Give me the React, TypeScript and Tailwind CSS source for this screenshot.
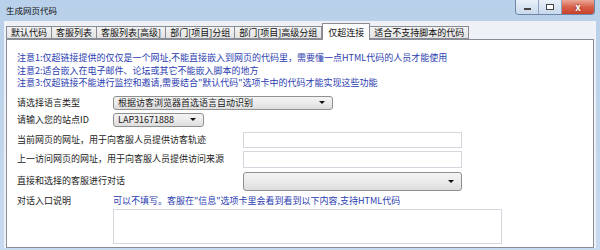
import React from 'react';

const tabs = ['默认代码', '客服列表', '客服列表[高级]', '部门[项目]分组', '部门[项目]高级分组', '仅超连接', '适合不支持脚本的代码'];
const activeTab = 5;

const notes = [
  '注意1:仅超链接提供的仅仅是一个网址,不能直接嵌入到网页的代码里，需要懂一点HTML代码的人员才能使用',
  '注意2:适合嵌入在电子邮件、论坛或其它不能嵌入脚本的地方',
  '注意3:仅超链接不能进行监控和邀请,需要结合"默认代码"选项卡中的代码才能实现这些功能',
];

// win7 style combo box
function Combo({ text, className }: { text?: string; className: string }) {
  return (
    <div
      className={`flex items-center justify-between rounded-[3px] border border-[#8f9090] bg-gradient-to-b from-[#f4f4f4] via-[#ebebeb] to-[#dddddd] pl-[4px] pr-[7px] ${className}`}
    >
      <span className="leading-none text-[#222]">{text}</span>
      <span className="h-0 w-0 border-x-[3px] border-t-[3px] border-x-transparent border-t-[#111]" />
    </div>
  );
}

function TextBox({ className }: { className: string }) {
  return <div className={`border border-[#d4d8de] bg-white ${className}`} />;
}

export default function App() {
  return (
    <div className="flex h-[250px] w-[600px] flex-col overflow-hidden bg-gradient-to-b from-[#b9d0ea] to-[#c7daef] font-['Noto_Sans_CJK_SC',sans-serif]">
      {/* Title bar */}
      <div className="flex h-[21px] shrink-0 items-start justify-between">
        <span className="pl-[6px] pt-[6px] text-[8.5px] leading-none text-[#111]">生成网页代码</span>
        <div className="mr-[5px] flex h-[15px] overflow-hidden rounded-b-[4px] border border-t-0 border-[#6d86a5]">
          <div className="flex w-[23px] items-end justify-center border-r border-[#8aa1bd] bg-gradient-to-b from-[#e9f0f8] to-[#c8d9ec] pb-[4px]">
            <div className="h-[2px] w-[7px] border border-[#444] bg-white" />
          </div>
          <div className="flex w-[23px] items-center justify-center border-r border-[#8aa1bd] bg-gradient-to-b from-[#e9f0f8] to-[#c8d9ec]">
            <div className="h-[6px] w-[8px] border border-[#444] bg-white" />
          </div>
          <div className="flex w-[32px] items-center justify-center bg-gradient-to-b from-[#eba898] via-[#d6604a] to-[#c8402b]">
            <span className="text-[10px] font-bold leading-none text-white [text-shadow:0_0_2px_#7a1d10]">x</span>
          </div>
        </div>
      </div>

      {/* Client area */}
      <div className="mx-[4px] mb-[2px] flex flex-1 flex-col bg-[#eef1f5] px-[2px] pt-[5px]">
        {/* Tabs */}
        <div className="flex h-[13px] shrink-0 items-end">
          {tabs.map((t, i) =>
            i === activeTab ? (
              <div
                key={t}
                className="relative z-10 -mb-px mt-[-3px] flex h-[17px] items-center border border-b-0 border-[#898c95] bg-white px-[5px] text-[9px] leading-none text-[#111]"
              >
                {t}
              </div>
            ) : (
              <div
                key={t}
                className="-ml-px flex h-[13px] items-center border border-[#898c95] bg-gradient-to-b from-[#f3f3f3] to-[#e3e3e3] px-[4px] text-[9px] leading-none text-[#111] first:ml-0"
              >
                {t}
              </div>
            )
          )}
        </div>

        {/* Panel */}
        <div className="flex w-[588px] flex-1 flex-col border border-[#898c95] bg-white pl-[10px] pt-[12px] text-[9px] text-[#222]">
          <div className="text-[#2a3cb0]">
            {notes.map((n) => (
              <div key={n} className="h-[12.5px] whitespace-nowrap leading-[12.5px]">
                {n}
              </div>
            ))}
          </div>

          <div className="mt-[6px] flex h-[14px] items-center">
            <span className="w-[96px]">请选择语言类型</span>
            <Combo text="根据访客浏览器首选语言自动识别" className="h-[14px] w-[220px]" />
          </div>
          <div className="mt-[3px] flex h-[14px] items-center">
            <span className="w-[96px]">请输入您的站点ID</span>
            <Combo text="LAP31671888" className="h-[14px] w-[91px]" />
          </div>
          <div className="mt-[5px] flex h-[16px] items-center">
            <span className="w-[226px] whitespace-nowrap">当前网页的网址，用于向客服人员提供访客轨迹</span>
            <TextBox className="h-[16px] w-[219px]" />
          </div>
          <div className="mt-[3px] flex h-[17px] items-center">
            <span className="w-[226px] whitespace-nowrap">上一访问网页的网址，用于向客服人员提供访问来源</span>
            <TextBox className="h-[17px] w-[219px]" />
          </div>
          <div className="mt-[4px] flex h-[19px] items-center">
            <span className="w-[226px] whitespace-nowrap">直接和选择的客服进行对话</span>
            <Combo className="h-[19px] w-[219px]" />
          </div>
          <div className="mt-[3px] flex h-[14px] items-center">
            <span className="w-[96px]">对话入口说明</span>
            <span className="whitespace-nowrap text-[#2a3cb0]">可以不填写。客服在"信息"选项卡里会看到看到以下内容,支持HTML代码</span>
          </div>
          <div className="mt-[1px] flex">
            <div className="w-[96px]" />
            <TextBox className="h-[35px] w-[389px]" />
          </div>
        </div>
      </div>
    </div>
  );
}
